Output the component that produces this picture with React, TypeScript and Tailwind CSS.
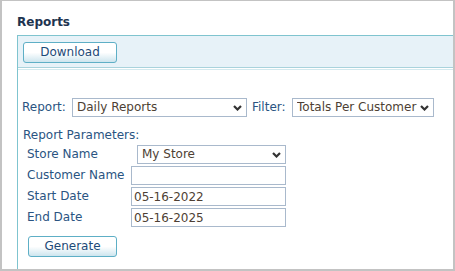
import React from 'react';

const labelCls = 'text-[#2a5482]';
const fieldCls =
  'h-[19px] border border-[#a9b9cc] bg-white text-[#4e3f34] text-[12px] leading-[17px] outline-none';

function Chevron() {
  return (
    <svg
      className="pointer-events-none absolute right-[5px] top-[7px]"
      width="9"
      height="6"
      viewBox="0 0 9 6"
      fill="none"
    >
      <path d="M1 1 L4.5 4.5 L8 1" stroke="#333" strokeWidth="2.2" />
    </svg>
  );
}

function Select({width, value, options}: {width: string; value: string; options: string[]}) {
  return (
    <div className={`relative flex ${width}`}>
      <select
        defaultValue={value}
        className={`${fieldCls} w-full appearance-none pl-[4px] pr-0`}
      >
        {options.map((o) => (
          <option key={o}>{o}</option>
        ))}
      </select>
      <Chevron />
    </div>
  );
}

function Button({label, width}: {label: string; width: string}) {
  return (
    <button
      className={`${width} h-[21px] rounded-[3px] border border-[#5eafc6] bg-linear-to-b from-white via-white to-[#cde5ee] text-[12px] leading-[19px] text-[#1d4a78]`}
    >
      {label}
    </button>
  );
}

export default function App() {
  return (
    <div
      className="flex h-[271px] w-[455px] flex-col border-t border-r-2 border-b-2 border-l-2 border-[#c3c3c3] bg-white pt-[14px] pl-[15px] text-[12px] leading-[15px]"
      style={{fontFamily: '"DejaVu Sans", Verdana, sans-serif'}}
    >
      <h1 className="h-[15px] font-bold text-[#1e3450]">Reports</h1>

      <div className="mt-[5px] flex flex-1 flex-col border-t border-l border-[#7fc4cf]">
        {/* toolbar */}
        <div className="h-[31px] bg-[#e7f2f8] pt-[6px] pl-[5px]">
          <Button label="Download" width="w-[94px]" />
        </div>
        <div className="h-px bg-[#a9d3dc]" />
        <div className="mt-px h-px bg-[#d3eaef]" />

        <div className="flex flex-col pl-[4px]">
          <div className="mt-[28px] flex items-center">
            <span className={`w-[50px] ${labelCls}`}>Report:</span>
            <Select
              width="w-[175px]"
              value="Daily Reports"
              options={['Daily Reports', 'Weekly Reports', 'Monthly Reports']}
            />
            <span className={`w-[45px] pl-[5px] ${labelCls}`}>Filter:</span>
            <Select
              width="w-[142px]"
              value="Totals Per Customer"
              options={['Totals Per Customer', 'Totals Per Store']}
            />
          </div>

          <div className={`mt-[11px] ml-px ${labelCls}`}>Report Parameters:</div>

          <div className="mt-[2px] ml-[5px] grid grid-cols-[104px_auto] gap-y-[2px]">
            <span className={`flex h-[19px] items-center ${labelCls}`}>Store Name</span>
            <div className="ml-[6px]">
              <Select width="w-[149px]" value="My Store" options={['My Store']} />
            </div>

            <span className={`flex h-[19px] items-center ${labelCls}`}>Customer Name</span>
            <input className={`${fieldCls} w-[155px] pl-[2px]`} defaultValue="" />

            <span className={`flex h-[19px] items-center ${labelCls}`}>Start Date</span>
            <input className={`${fieldCls} w-[155px] pl-[2px]`} defaultValue="05-16-2022" />

            <span className={`flex h-[19px] items-center ${labelCls}`}>End Date</span>
            <input className={`${fieldCls} w-[155px] pl-[2px]`} defaultValue="05-16-2025" />
          </div>

          <div className="mt-[9px] ml-[6px]">
            <Button label="Generate" width="w-[89px]" />
          </div>
        </div>
      </div>
    </div>
  );
}
